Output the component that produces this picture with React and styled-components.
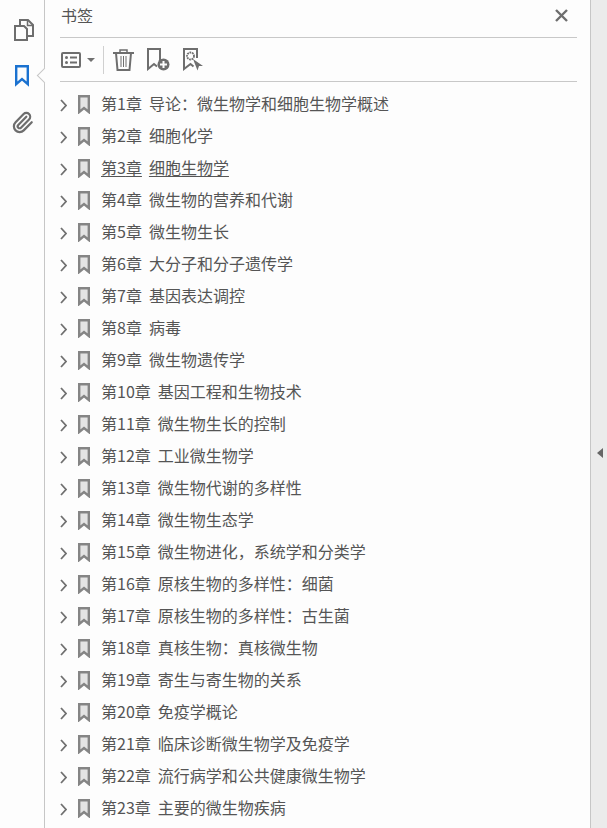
import React from 'react'
import styled, { createGlobalStyle } from 'styled-components'

const chapters = [
  '导论：微生物学和细胞生物学概述', '细胞化学', '细胞生物学', '微生物的营养和代谢', '微生物生长',
  '大分子和分子遗传学', '基因表达调控', '病毒', '微生物遗传学', '基因工程和生物技术',
  '微生物生长的控制', '工业微生物学', '微生物代谢的多样性', '微生物生态学', '微生物进化，系统学和分类学',
  '原核生物的多样性：细菌', '原核生物的多样性：古生菌', '真核生物：真核微生物', '寄生与寄生物的关系', '免疫学概论',
  '临床诊断微生物学及免疫学', '流行病学和公共健康微生物学', '主要的微生物疾病',
]

const GlobalStyle = createGlobalStyle`
  html, body { margin: 0; padding: 0; overflow: hidden; }
  body { font-family: "Noto Sans CJK SC", "Liberation Sans", sans-serif; }
`

const Shell = styled.div`
  width: 607px;
  height: 828px;
  display: flex;
  overflow: hidden;
  background: #fdfdfd;
`
const Rail = styled.nav`
  width: 45px;
  flex: none;
  box-sizing: border-box;
  border-right: 1px solid #c6c6c6;
  display: flex;
  flex-direction: column;
  align-items: center;
  padding: 19px 0 0;
  gap: 24px;
  position: relative;
`
const RailNotch = styled.span`
  position: absolute;
  left: 39px;
  top: 70px;
  width: 10px;
  height: 10px;
  background: #fdfdfd;
  border-left: 1px solid #c6c6c6;
  border-bottom: 1px solid #c6c6c6;
  transform: rotate(45deg);
`
const PagesSvg = styled.svg`
  margin-left: 3px;
`
const Panel = styled.main`
  flex: 1;
  min-width: 0;
  padding-left: 15px;
  padding-right: 13px;
  display: flex;
  flex-direction: column;
`
const Header = styled.header`
  height: 38px;
  box-sizing: border-box;
  border-bottom: 1px solid #c8c8c8;
  display: flex;
  align-items: center;
  justify-content: space-between;
  padding: 0 9px 7px 1px;
`
const Title = styled.h1`
  margin: 0;
  font-size: 16px;
  font-weight: 400;
  color: #555;
`
const CloseSvg = styled.svg`
  margin-top: 1px;
`
const Toolbar = styled.div`
  height: 44px;
  box-sizing: border-box;
  border-bottom: 1px solid #c8c8c8;
  display: flex;
  align-items: center;
  padding-left: 1px;
`
const ToolDivider = styled.span`
  width: 1px;
  height: 28px;
  background: #d0d0d0;
  margin: 0 9px 0 8px;
`
const Tool = styled.span`
  display: flex;
  margin-right: ${p => p.$gap || 0}px;
`
const Caret = styled.span`
  width: 0;
  height: 0;
  border-left: 4px solid transparent;
  border-right: 4px solid transparent;
  border-top: 4px solid #707070;
  margin-left: 6px;
`
const List = styled.ul`
  list-style: none;
  margin: 6px 0 0;
  padding: 0;
`
const Row = styled.li`
  height: 32px;
  display: flex;
  align-items: center;
  color: #555;
  font-size: 16px;
  white-space: nowrap;
`
const Chevron = styled.svg`
  width: 7px;
  height: 13px;
  margin: 2px 11px 0 0;
  flex: none;
`
const Mark = styled.svg`
  width: 12px;
  height: 19px;
  margin: 1px 11px 0 0;
  flex: none;
`
const Label = styled.span`
  margin-bottom: 2px;
  text-decoration: ${p => (p.$active ? 'underline' : 'none')};
  text-underline-offset: 2px;
  text-decoration-thickness: 1px;
`
const Chapter = styled.span`
  margin-right: 7px;
`
const Strip = styled.aside`
  width: 17px;
  flex: none;
  box-sizing: border-box;
  background: #ebebeb;
  border-left: 1px solid #c6c6c6;
  display: flex;
  align-items: center;
  justify-content: center;
  padding: 78px 0 0 2px;
`
const StripArrow = styled.span`
  width: 0;
  height: 0;
  border-top: 5px solid transparent;
  border-bottom: 5px solid transparent;
  border-right: 6px solid #666;
`

function PagesIcon() {
  return (
    <PagesSvg width="20" height="22" viewBox="0 0 20 22" fill="none" stroke="#6e6e6e" strokeWidth="2">
      <path d="M6 6V1h8l5 5v11h-6" />
      <path d="M13.500 1v5.500H19" strokeWidth="1.500" />
      <path d="M1 7h9l3 3v11H1z" />
    </PagesSvg>
  )
}
function BookmarkBlue() {
  return (
    <svg width="14" height="22" viewBox="0 0 14 22" fill="none" stroke="#1b72d0" strokeWidth="2.400">
      <path d="M1.200 1.200h11.600v18l-5.800-5-5.800 5z" />
    </svg>
  )
}
function ClipIcon() {
  return (
    <svg width="23" height="23" viewBox="0 0 24 24" fill="none" stroke="#6e6e6e" strokeWidth="2.300" strokeLinecap="round" strokeLinejoin="round">
      <path d="m16 6-8.414 8.586a2 2 0 0 0 2.829 2.829l8.414-8.586a4 4 0 1 0-5.657-5.657l-8.379 8.551a6 6 0 1 0 8.485 8.485l8.379-8.551" />
    </svg>
  )
}
function ListIcon() {
  return (
    <svg width="20" height="16" viewBox="0 0 20 16" fill="none" stroke="#6e6e6e" strokeWidth="2">
      <rect x="1" y="1" width="18" height="14" rx="1" />
      <circle cx="5.500" cy="5.500" r="1.500" fill="#6e6e6e" stroke="none" />
      <circle cx="5.500" cy="10.500" r="1.500" fill="#6e6e6e" stroke="none" />
      <path d="M9 5.500h7M9 10.500h7" />
    </svg>
  )
}
function TrashIcon() {
  return (
    <svg width="21" height="22" viewBox="0 0 21 22" fill="none" stroke="#6e6e6e" strokeWidth="2">
      <path d="M0 4h21" />
      <path d="M7 4V1h7v3" strokeWidth="1.500" />
      <path d="M3 4l1.500 17h12L18 4" />
      <path d="M8 7v11M10.500 7v11M13 7v11" strokeWidth="1" />
    </svg>
  )
}
function AddBookmarkIcon() {
  return (
    <svg width="23" height="23" viewBox="0 0 23 23" fill="none" stroke="#6e6e6e" strokeWidth="2">
      <path d="M13 13V1H1v20l6-5 3 2.500" />
      <circle cx="16.500" cy="16.500" r="6" fill="#6e6e6e" stroke="none" />
      <path d="M16.500 13v7M13 16.500h7" stroke="#fdfdfd" strokeWidth="2" />
    </svg>
  )
}
function SelectBookmarkIcon() {
  return (
    <svg width="20" height="23" viewBox="0 0 20 23" fill="none" stroke="#6e6e6e" strokeWidth="2">
      <path d="M14 10V1H1v20l6.500-5 3 2.500" />
      <circle cx="7.500" cy="8" r="3.500" strokeWidth="1.800" strokeDasharray="1.800 0.700" />
      <path d="M10 11l10 7h-4l-1.500 4.500z" fill="#6e6e6e" stroke="none" />
    </svg>
  )
}
function RowChevron() {
  return (
    <Chevron viewBox="0 0 7 13" fill="none" stroke="#707070" strokeWidth="1.800">
      <path d="M1 1l5 5.500-5 5.500" />
    </Chevron>
  )
}
function RowMark() {
  return (
    <Mark viewBox="0 0 12 19" fill="#e4e4e4" stroke="#858585" strokeWidth="2.400">
      <path d="M1.200 1.200h9.600v15.800l-4.800-4-4.800 4z" />
    </Mark>
  )
}

export default function App() {
  return (
    <Shell>
      <GlobalStyle />
      <Rail>
        <PagesIcon />
        <BookmarkBlue />
        <ClipIcon />
        <RailNotch />
      </Rail>
      <Panel>
        <Header>
          <Title>书签</Title>
          <CloseSvg width="13" height="13" viewBox="0 0 13 13" stroke="#6e6e6e" strokeWidth="2.400">
            <path d="M1 1l11 11M12 1L1 12" />
          </CloseSvg>
        </Header>
        <Toolbar>
          <ListIcon />
          <Caret />
          <ToolDivider />
          <Tool $gap={13}><TrashIcon /></Tool>
          <Tool $gap={13}><AddBookmarkIcon /></Tool>
          <Tool><SelectBookmarkIcon /></Tool>
        </Toolbar>
        <List>
          {chapters.map((name, i) => (
            <Row key={name}>
              <RowChevron />
              <RowMark />
              <Label $active={i === 2}>
                <Chapter>第{i + 1}章</Chapter>{name}
              </Label>
            </Row>
          ))}
        </List>
      </Panel>
      <Strip><StripArrow /></Strip>
    </Shell>
  )
}
